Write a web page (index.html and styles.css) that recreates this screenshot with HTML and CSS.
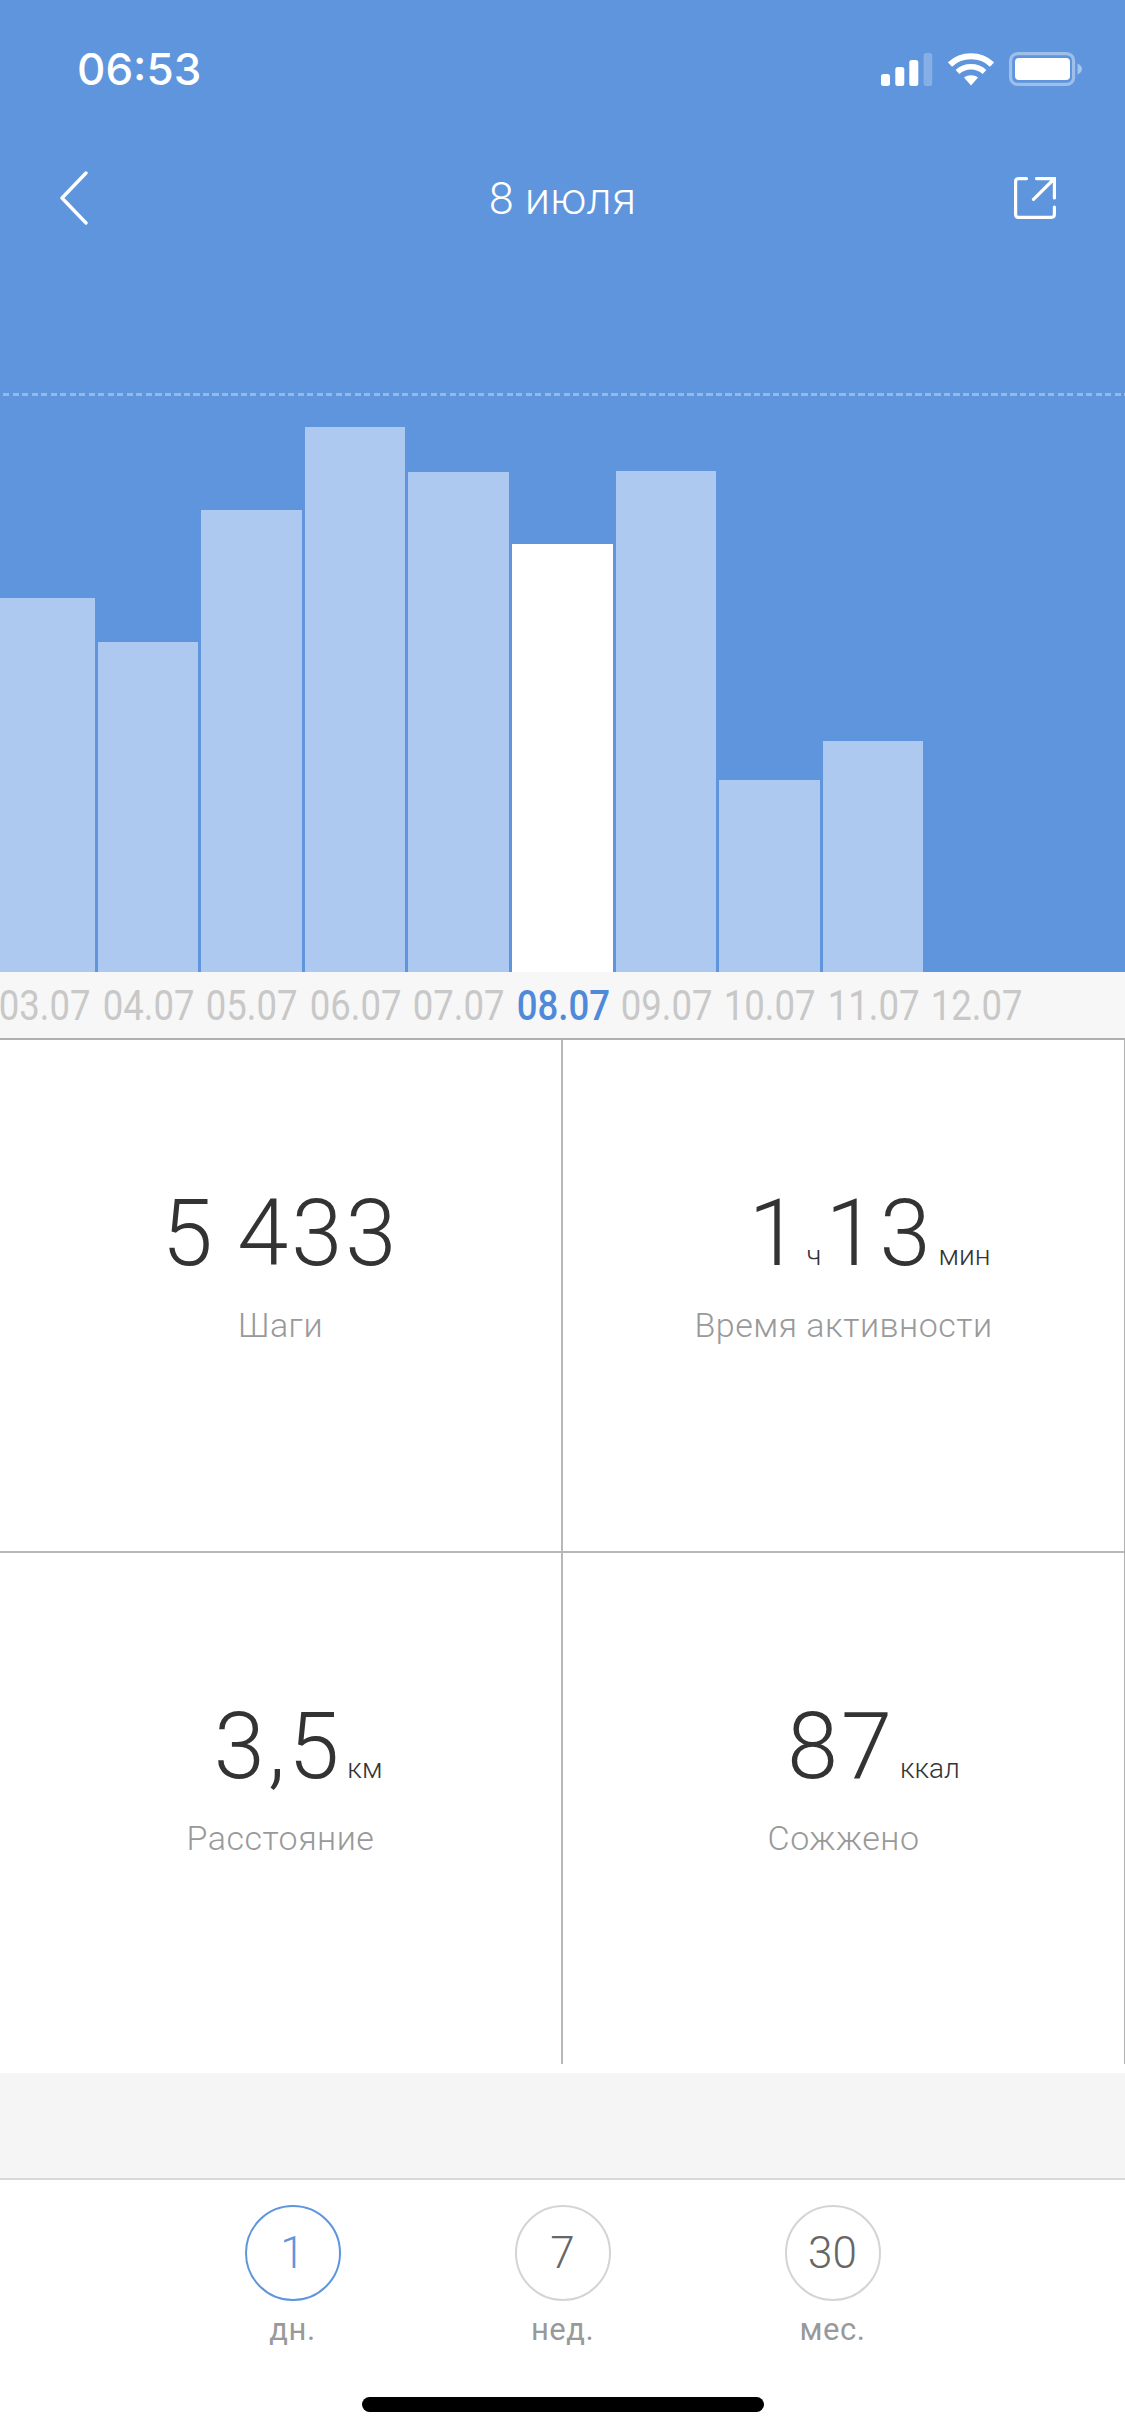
FILE: index.html
```html
<html>
    <head>
        <title>Активность</title>
        <meta charset="utf-8">
        <link rel="stylesheet" href="styles.css">
    </head>

    <body>
        <div class="screen">
            <div class="hero">
                <div class="statusBar">
                    <div class="clock">06:53</div>
                    <div class="statusIcons">
                        <svg class="signalIcon" width="52" height="33" viewBox="0 0 52 33">
                            <rect x="0" y="21" width="9" height="12" rx="2.5" fill="#fff"/>
                            <rect x="14.3" y="14" width="9" height="19" rx="2.5" fill="#fff"/>
                            <rect x="28.3" y="7" width="9" height="26" rx="2.5" fill="#fff"/>
                            <rect x="42.6" y="0" width="8.6" height="33" rx="2.5" fill="#fff" fill-opacity=".25"/>
                        </svg>
                        <svg class="wifiIcon" width="46" height="34" viewBox="0 0 46 34">
                            <path d="M2 12.5C13.5 1.5 32.5 1.5 44 12.5" fill="none" stroke="#fff" stroke-width="6"/>
                            <path d="M9.5 20C17 13 29 13 36.5 20" fill="none" stroke="#fff" stroke-width="5.5"/>
                            <path d="M16 25.5C20 22.5 26 22.5 30 25.5L23 33.5Z" fill="#fff"/>
                        </svg>
                        <svg class="batteryIcon" width="73" height="34" viewBox="0 0 73 34">
                            <rect x="1.6" y="1.6" width="63" height="30.8" rx="7" fill="none" stroke="#fff" stroke-opacity=".4" stroke-width="3.2"/>
                            <rect x="6" y="6" width="55" height="22" rx="4" fill="#fff"/>
                            <path d="M68.5 11.5C71 12.5 73 14.500 73 17C73 19.500 71 21.500 68.5 22.500Z" fill="#fff" fill-opacity=".45"/>
                        </svg>
                    </div>
                </div>
                <div class="navBar">
                    <svg class="backIcon" width="28" height="54" viewBox="0 0 28 54">
                        <path d="M26 2L2 27L26 52" fill="none" stroke="#fff" stroke-width="3.4" stroke-linecap="round" stroke-linejoin="round"/>
                    </svg>
                    <div class="navTitle">8 июля</div>
                    <svg class="shareIcon" width="42" height="42" viewBox="0 0 42 42">
                        <path d="M12.5 1.600H4.500A3 3 0 0 0 1.600 4.500V37.500A3 3 0 0 0 4.500 40.400H37.500A3 3 0 0 0 40.400 37.500V30" fill="none" stroke="#fff" stroke-width="3.200" stroke-linecap="round"/>
                        <path d="M22.500 1.600H40.400V21M40 2L19.500 22.300" fill="none" stroke="#fff" stroke-width="3.200" stroke-linecap="round"/>
                    </svg>
                </div>
                <div class="chart">
                    <div class="bar" style="height: 374px"></div>
                    <div class="bar" style="height: 330px"></div>
                    <div class="bar" style="height: 462px"></div>
                    <div class="bar" style="height: 545px"></div>
                    <div class="bar" style="height: 500px"></div>
                    <div class="bar current" style="height: 428px"></div>
                    <div class="bar" style="height: 501px"></div>
                    <div class="bar" style="height: 192px"></div>
                    <div class="bar" style="height: 231px"></div>
                    <div class="bar" style="height: 0"></div>
                </div>
            </div>

            <div class="dates">
                <div class="date">03.07</div>
                <div class="date">04.07</div>
                <div class="date">05.07</div>
                <div class="date">06.07</div>
                <div class="date">07.07</div>
                <div class="date current">08.07</div>
                <div class="date">09.07</div>
                <div class="date">10.07</div>
                <div class="date">11.07</div>
                <div class="date">12.07</div>
            </div>

            <div class="stats">
                <div class="stat">
                    <div class="value">5 433</div>
                    <div class="label">Шаги</div>
                </div>
                <div class="stat">
                    <div class="value">1<span class="unit">ч</span>13<span class="unit hang">мин</span></div>
                    <div class="label">Время активности</div>
                </div>
                <div class="stat">
                    <div class="value">3,5<span class="unit hang">км</span></div>
                    <div class="label">Расстояние</div>
                </div>
                <div class="stat">
                    <div class="value">87<span class="unit hang">ккал</span></div>
                    <div class="label">Сожжено</div>
                </div>
            </div>

            <div class="spacer"></div>

            <div class="tabs">
                <div class="tab active">
                    <div class="circle">1</div>
                    <div class="tabLabel">дн.</div>
                </div>
                <div class="tab">
                    <div class="circle">7</div>
                    <div class="tabLabel">нед.</div>
                </div>
                <div class="tab">
                    <div class="circle">30</div>
                    <div class="tabLabel">мес.</div>
                </div>
            </div>

            <div class="homeBar"></div>
        </div>
    </body>
</html>
```

FILE: styles.css
```css
html, body {
    margin: 0;
    padding: 0;
}
.screen {
    width: 1125px;
    height: 2436px;
    overflow: hidden;
    background-color: white;
    font-family: Roboto, sans-serif;
}
.hero {
    height: 972px;
    background-color: #5e95dd;
    color: white;
}
.statusBar {
    display: flex;
    justify-content: space-between;
    align-items: center;
    height: 138px;
    padding: 0 43px 0 77px;
}
.clock {
    font-family: Inter, sans-serif;
    font-size: 44px;
    font-weight: 500;
}
.statusIcons {
    display: flex;
    align-items: flex-end;
}
.signalIcon {
    margin-right: 15px;
}
.wifiIcon {
    margin-right: 15px;
}
.navBar {
    display: grid;
    grid-template-columns: 1fr auto 1fr;
    align-items: center;
    height: 120px;
    padding: 0 69px;
}
.backIcon {
    margin-left: -9px;
}
.navTitle {
    font-size: 45px;
    font-weight: 300;
}
.shareIcon {
    justify-self: end;
}
.chart {
    display: flex;
    align-items: flex-end;
    gap: 3px;
    height: 579px;
    margin-top: 135px;
    margin-left: -6px;
    background-image: repeating-linear-gradient(90deg, #93b8ea 0, #93b8ea 6px, transparent 6px, transparent 9.5px);
    background-size: 100% 3px;
    background-repeat: no-repeat;
}
.bar {
    width: 100.6px;
    flex: none;
    background-color: #adc9ef;
}
.bar.current {
    background-color: white;
}
.dates {
    display: flex;
    align-items: center;
    height: 66px;
    margin-left: -8px;
    background-color: #f7f7f7;
    border-bottom: 2px solid #b0b0b0;
}
.date {
    width: 103.6px;
    flex: none;
    text-align: center;
    font-size: 42px;
    color: #c8c8c8;
    transform: scaleX(.87);
}
.date.current {
    color: #4f89d9;
    font-weight: 500;
}
.stats {
    display: grid;
    grid-template-columns: 563px 561px;
    grid-template-rows: 513px 511px;
    border-right: 1px solid #b0b0b0;
}
.stat {
    display: flex;
    flex-direction: column;
    align-items: center;
    padding-top: 141px;
    box-sizing: border-box;
}
.stat:nth-child(odd) {
    border-right: 2px solid #b8b8b8;
}
.stat:nth-child(-n+2) {
    border-bottom: 2px solid #b8b8b8;
}
.value {
    font-size: 92px;
    font-weight: 350;
    line-height: 106px;
    letter-spacing: 3px;
    word-spacing: -4px;
    color: #333333;
    white-space: nowrap;
}
.unit {
    font-size: 28px;
    font-weight: 300;
    line-height: 1;
    letter-spacing: 0;
    margin: 0 4px;
}
.unit.hang {
    display: inline-block;
    width: 0;
    margin: 0 0 0 5px;
}
.label {
    margin-top: 18px;
    font-size: 34px;
    font-weight: 300;
    letter-spacing: .5px;
    color: #999999;
}
.spacer {
    height: 105px;
    margin-top: 9px;
    background-color: #f5f5f5;
    border-bottom: 2px solid #d8d8d8;
}
.tabs {
    display: flex;
    justify-content: center;
    gap: 174px;
    padding-top: 25px;
}
.tab {
    display: flex;
    flex-direction: column;
    align-items: center;
}
.circle {
    display: flex;
    justify-content: center;
    align-items: center;
    width: 96px;
    height: 96px;
    box-sizing: border-box;
    border: 2px solid #d4d4d4;
    border-radius: 50%;
    font-size: 44px;
    font-weight: 300;
    color: #666666;
}
.tab.active .circle {
    border-color: #5e95dd;
    color: #5e95dd;
}
.tabLabel {
    margin-top: 11px;
    font-size: 31px;
    line-height: 36px;
    letter-spacing: .5px;
    color: #999999;
}
.homeBar {
    width: 402px;
    height: 15px;
    margin: 49px auto 0;
    border-radius: 8px;
    background-color: black;
}
```
